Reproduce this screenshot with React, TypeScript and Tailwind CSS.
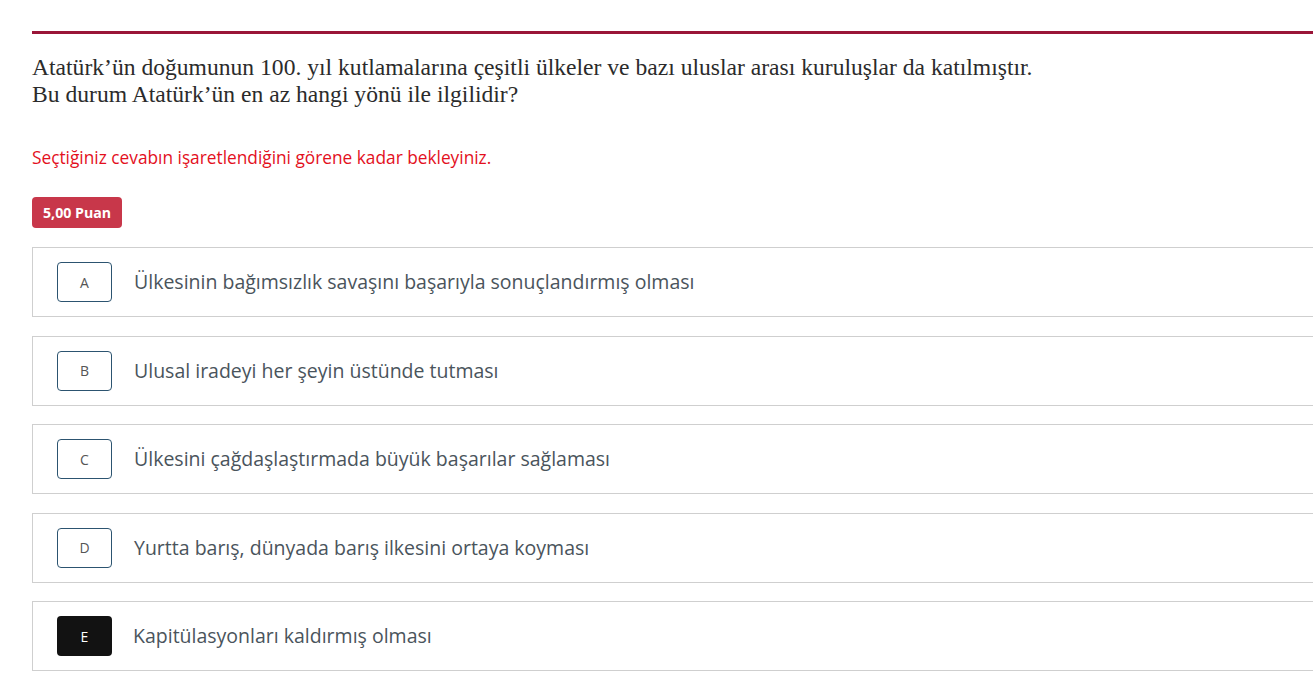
import React from "react";

const options = [
  { l: "A", t: "Ülkesinin bağımsızlık savaşını başarıyla sonuçlandırmış olması" },
  { l: "B", t: "Ulusal iradeyi her şeyin üstünde tutması" },
  { l: "C", t: "Ülkesini çağdaşlaştırmada büyük başarılar sağlaması" },
  { l: "D", t: "Yurtta barış, dünyada barış ilkesini ortaya koyması" },
  { l: "E", t: "Kapitülasyonları kaldırmış olması", selected: true },
];

const sans = { fontFamily: '"Open Sans", Lato, sans-serif' };

export default function App() {
  return (
    <div className="w-[1313px] h-[689px] overflow-hidden bg-white">
      <div className="pl-[32px] pt-[31px] w-[1330px]">
        <div className="h-[3px] bg-[#9a1538] mr-[17px]" />
        <div
          className="mt-[20px] text-[23.6px] leading-[27px] text-[#2b2b2b]"
          style={{ fontFamily: '"Liberation Serif", "Times New Roman", serif' }}
        >
          <div>Atatürk’ün doğumunun 100. yıl kutlamalarına çeşitli ülkeler ve bazı uluslar arası kuruluşlar da katılmıştır.</div>
          <div>Bu durum Atatürk’ün en az hangi yönü ile ilgilidir?</div>
        </div>
        <div className="mt-[38px] text-[17.3px] leading-[23px] text-[#e3101d]" style={sans}>
          Seçtiğiniz cevabın işaretlendiğini görene kadar bekleyiniz.
        </div>
        <div className="mt-[28px] flex">
          <div
            className="h-[31px] px-[11px] rounded-[4px] bg-[#c8374a] text-white text-[14.2px] font-bold flex items-center"
            style={sans}
          >
            5,00 Puan
          </div>
        </div>
        <div className="mt-[19px] flex flex-col gap-[18.5px]" style={sans}>
          {options.map((o) => (
            <div key={o.l} className="h-[70px] border border-[#cfcfcf] flex items-center pl-[24px]">
              <div
                className={
                  o.selected
                    ? "w-[55px] h-[40px] rounded-[4px] bg-[#121212] text-white text-[14px] flex items-center justify-center"
                    : "w-[55px] h-[40px] rounded-[4px] border border-[#2c5470] text-[#555] text-[14px] flex items-center justify-center"
                }
              >
                {o.l}
              </div>
              <div className={o.selected ? "ml-[21px] text-[19.5px] text-[#4a545c]" : "ml-[22px] text-[19.5px] text-[#4a545c]"}>{o.t}</div>
            </div>
          ))}
        </div>
      </div>
    </div>
  );
}
